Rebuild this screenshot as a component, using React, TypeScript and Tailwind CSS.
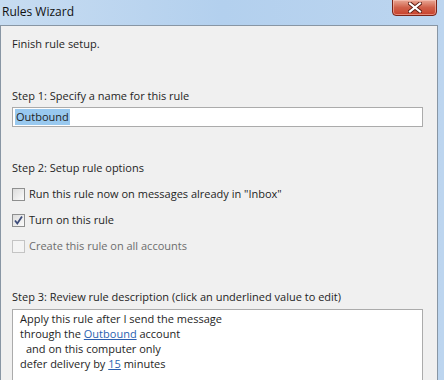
import React from "react";

const font = { fontFamily: '"Open Sans", "Noto Sans", "Liberation Sans", sans-serif' };

type BoxProps = { checked?: boolean; disabled?: boolean };

const CheckBox = ({ checked = false, disabled = false }: BoxProps) => (
  <span
    className={
      disabled
        ? "w-[13px] h-[13px] shrink-0 border border-[#c4c4c4] bg-[#f4f4f4]"
        : "w-[13px] h-[13px] shrink-0 border border-[#8e8f8f] bg-gradient-to-br from-[#dcdcdc] to-[#fbfbfb] flex items-center justify-center"
    }
  >
    {checked && (
      <svg width="11" height="11" viewBox="0 0 11 11">
        <path d="M2 5.5 L4.3 8.5 L9 1.5" fill="none" stroke="#3d4c7a" strokeWidth="1.8" />
      </svg>
    )}
  </span>
);

const CloseButton = () => (
  <div className="w-[45px] h-[17px] -mt-[1px] rounded-b-[4px] border border-[#7a2418] bg-gradient-to-b from-[#e8a795] via-[#d0604a] to-[#c8402a] flex items-center justify-center shadow-[inset_0_0_0_1px_rgba(255,210,200,0.5)]">
    <svg width="14" height="11" viewBox="0 0 14 11">
      <path d="M2 1.5 L12 9.5 M12 1.5 L2 9.5" stroke="#5a1a10" strokeWidth="4" strokeLinecap="square" />
      <path d="M2 1.5 L12 9.5 M12 1.5 L2 9.5" stroke="#ffffff" strokeWidth="2.2" strokeLinecap="square" />
    </svg>
  </div>
);

const options = [
  { label: 'Run this rule now on messages already in "Inbox"', checked: false, disabled: false },
  { label: "Turn on this rule", checked: true, disabled: false },
  { label: "Create this rule on all accounts", checked: false, disabled: true },
];

export default function App() {
  return (
    <div
      className="w-[444px] h-[380px] overflow-hidden flex flex-col bg-gradient-to-r from-[#c7dcf1] via-[#b3d0ee] to-[#bcd5ef] text-[11px] text-[#1e1e1e]"
      style={font}
    >
      <div className="h-[25px] shrink-0 flex items-start justify-between pr-[7px]">
        <span className="pl-[2px] pt-[4px] leading-[16px] text-[12px] text-[#111]">Rules Wizard</span>
        <CloseButton />
      </div>

      <div className="flex-1 mr-[6px] border border-b-0 border-[#8896a4] bg-[#f0f0f0] px-[11px] pt-[10px] flex flex-col">
        <div className="leading-[16px]">Finish rule setup.</div>

        <div className="mt-[36px] leading-[16px]">Step 1: Specify a name for this rule</div>
        <div className="mt-[3px] h-[20px] w-[411px] border border-[#ababab] bg-white flex items-center px-[2px]">
          <span className="bg-[#99c9ef] leading-[16px] px-[1px]">Outbound</span>
        </div>

        <div className="mt-[33px] leading-[16px]">Step 2: Setup rule options</div>
        <div className="mt-[10px] flex flex-col gap-[10px]">
          {options.map((o) => (
            <div key={o.label} className="flex items-center gap-[4px] h-[16px]">
              <CheckBox checked={o.checked} disabled={o.disabled} />
              <span className={o.disabled ? "leading-[16px] text-[#6d6d6d]" : "leading-[16px]"}>{o.label}</span>
            </div>
          ))}
        </div>

        <div className="mt-[35px] leading-[16px]">Step 3: Review rule description (click an underlined value to edit)</div>
        <div className="mt-[4px] flex-1 w-[411px] border border-b-0 border-[#ababab] bg-white px-[7px] pt-[1px] leading-[15px]">
          <div>Apply this rule after I send the message</div>
          <div>
            through the <span className="text-[#2a5fb0] underline">Outbound</span> account
          </div>
          <div className="pl-[6px]">and on this computer only</div>
          <div>
            defer delivery by <span className="text-[#2a5fb0] underline">15</span> minutes
          </div>
        </div>
      </div>
    </div>
  );
}
